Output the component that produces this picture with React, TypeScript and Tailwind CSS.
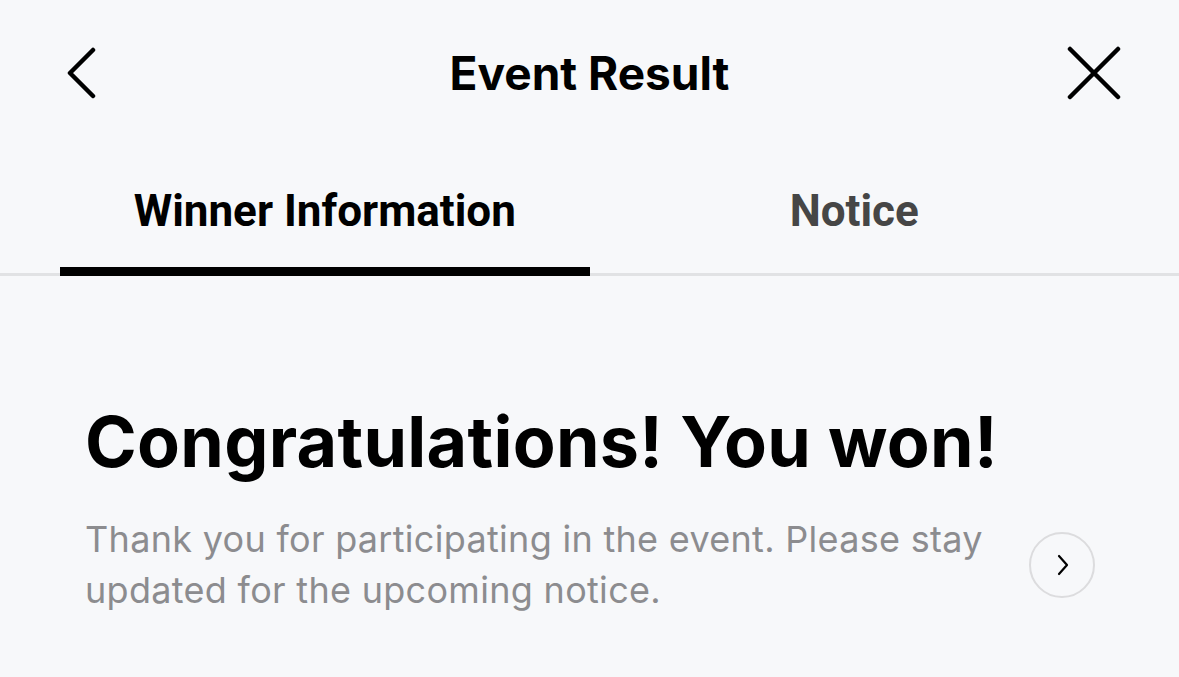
import React from "react";

const BackIcon = () => (
  <svg width="30" height="52" viewBox="0 0 30 52" fill="none">
    <path d="M27 3 L4 26 L27 49" stroke="#000" strokeWidth="4.5" strokeLinecap="round" strokeLinejoin="round" />
  </svg>
);

const CloseIcon = () => (
  <svg width="54" height="54" viewBox="0 0 54 54" fill="none">
    <path d="M3 3 L51 51 M51 3 L3 51" stroke="#000" strokeWidth="4.5" strokeLinecap="round" />
  </svg>
);

const ChevronRight = () => (
  <svg width="12" height="22" viewBox="0 0 12 22" fill="none">
    <path d="M2 2 L10 11 L2 20" stroke="#000" strokeWidth="2.2" strokeLinecap="round" strokeLinejoin="round" />
  </svg>
);

export default function App() {
  return (
    <div className="min-h-[677px] w-full bg-[#f7f8fa] font-['Inter',sans-serif] text-black">
      {/* header */}
      <div className="grid h-[146px] grid-cols-[1fr_auto_1fr] items-center px-[62px]">
        <div className="flex justify-start pl-[4px]">
          <BackIcon />
        </div>
        <h1 className="text-[46px] font-bold">Event Result</h1>
        <div className="mr-[-4px] flex justify-end">
          <CloseIcon />
        </div>
      </div>

      {/* tabs */}
      <div className="relative px-[60px]">
        <div className="absolute bottom-0 left-0 right-0 h-[3px] bg-[#e1e2e4]" />
        <div className="relative grid grid-cols-2">
          <div className="flex flex-col items-center">
            <div className="flex h-[121px] items-center pt-[8px] font-['Roboto',sans-serif] text-[44px] font-bold">
              Winner Information
            </div>
            <div className="h-[9px] w-full bg-black" />
          </div>
          <div className="flex flex-col items-center">
            <div className="flex h-[121px] items-center pt-[8px] font-['Roboto',sans-serif] text-[44px] font-bold text-[#464646]">
              Notice
            </div>
          </div>
        </div>
      </div>

      {/* content */}
      <div className="pl-[85px] pr-[84px] pt-[124px]">
        <h2 className="text-[70px] font-bold leading-[84px] tracking-[0.3px]">Congratulations! You won!</h2>
        <div className="mt-[30px] flex items-center gap-[30px]">
          <p className="flex-1 text-[36px] leading-[51px] tracking-[0.3px] text-[#8c8c8f]">
            Thank you for participating in the event. Please stay updated for the upcoming notice.
          </p>
          <button className="flex h-[66px] w-[66px] shrink-0 items-center justify-center rounded-full border-2 border-[#dcdcde] pl-[2px]">
            <ChevronRight />
          </button>
        </div>
      </div>
    </div>
  );
}
